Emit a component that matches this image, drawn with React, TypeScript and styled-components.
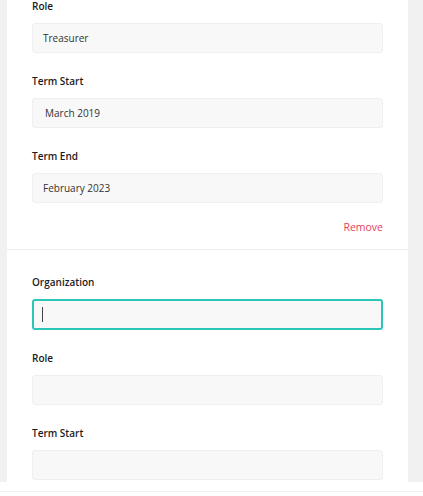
import React from "react";
import styled, { createGlobalStyle } from "styled-components";

const Global = createGlobalStyle`
  html, body { margin: 0; padding: 0; }
  body {
    font-family: "Open Sans", "Noto Sans", sans-serif;
    background: #ffffff;
  }
`;

const Page = styled.div`
  height: 496px;
  display: grid;
  grid-template-rows: 482px 14px;
  overflow: hidden;
`;

const Main = styled.div`
  display: grid;
  grid-template-columns: 7px 401px 1fr;
  background: #f1f1f1;
  overflow: hidden;
`;

const Gutter = styled.div`
  background: #f1f1f1;
`;

const Panel = styled.div`
  background: #ffffff;
  margin-top: -2px;
`;

const Section = styled.div<{ $top?: number }>`
  display: flex;
  flex-direction: column;
  gap: 20px;
  padding: ${(p) => p.$top ?? 0}px 25px 0 25px;
`;

const Field = styled.div`
  display: flex;
  flex-direction: column;
  gap: 9px;
`;

const Label = styled.div`
  font-size: 10px;
  line-height: 16px;
  font-weight: 600;
  color: #1c1c1c;
`;

const Input = styled.div<{ $focused?: boolean; $indent?: number }>`
  box-sizing: border-box;
  height: ${(p) => (p.$focused ? 31 : 30)}px;
  display: flex;
  align-items: center;
  padding-left: ${(p) => (p.$focused ? 8 : 10) + (p.$indent ?? 0)}px;
  background: #f8f8f8;
  border: ${(p) => (p.$focused ? "2px solid #2cc6b6" : "1px solid #efefef")};
  border-radius: 3px;
  font-size: 10px;
  color: #333333;
`;

const Caret = styled.span`
  display: inline-block;
  width: 1px;
  height: 15px;
  background: #444;
`;

const Actions = styled.div`
  display: flex;
  justify-content: flex-end;
  padding: 16px 25px 14px 25px;
`;

const RemoveLink = styled.span`
  font-size: 10.5px;
  line-height: 16px;
  font-weight: 400;
  color: #e5405a;
`;

const Divider = styled.div`
  height: 1px;
  background: #ececec;
`;

const Footer = styled.div`
  background: #ffffff;
  padding-top: 9px;
`;

const FooterLine = styled.div`
  height: 1px;
  background: #f0f0f0;
`;

export default function App() {
  return (
    <>
      <Global />
      <Page>
        <Main>
          <Gutter />
          <Panel>
            <Section>
              <Field>
                <Label>Role</Label>
                <Input>Treasurer</Input>
              </Field>
              <Field>
                <Label>Term Start</Label>
                <Input $indent={2}>March 2019</Input>
              </Field>
              <Field>
                <Label>Term End</Label>
                <Input>February 2023</Input>
              </Field>
            </Section>
            <Actions>
              <RemoveLink>Remove</RemoveLink>
            </Actions>
            <Divider />
            <Section $top={24}>
              <Field>
                <Label>Organization</Label>
                <Input $focused>
                  <Caret />
                </Input>
              </Field>
              <Field>
                <Label>Role</Label>
                <Input />
              </Field>
              <Field>
                <Label>Term Start</Label>
                <Input />
              </Field>
            </Section>
          </Panel>
          <Gutter />
        </Main>
        <Footer>
          <FooterLine />
        </Footer>
      </Page>
    </>
  );
}
